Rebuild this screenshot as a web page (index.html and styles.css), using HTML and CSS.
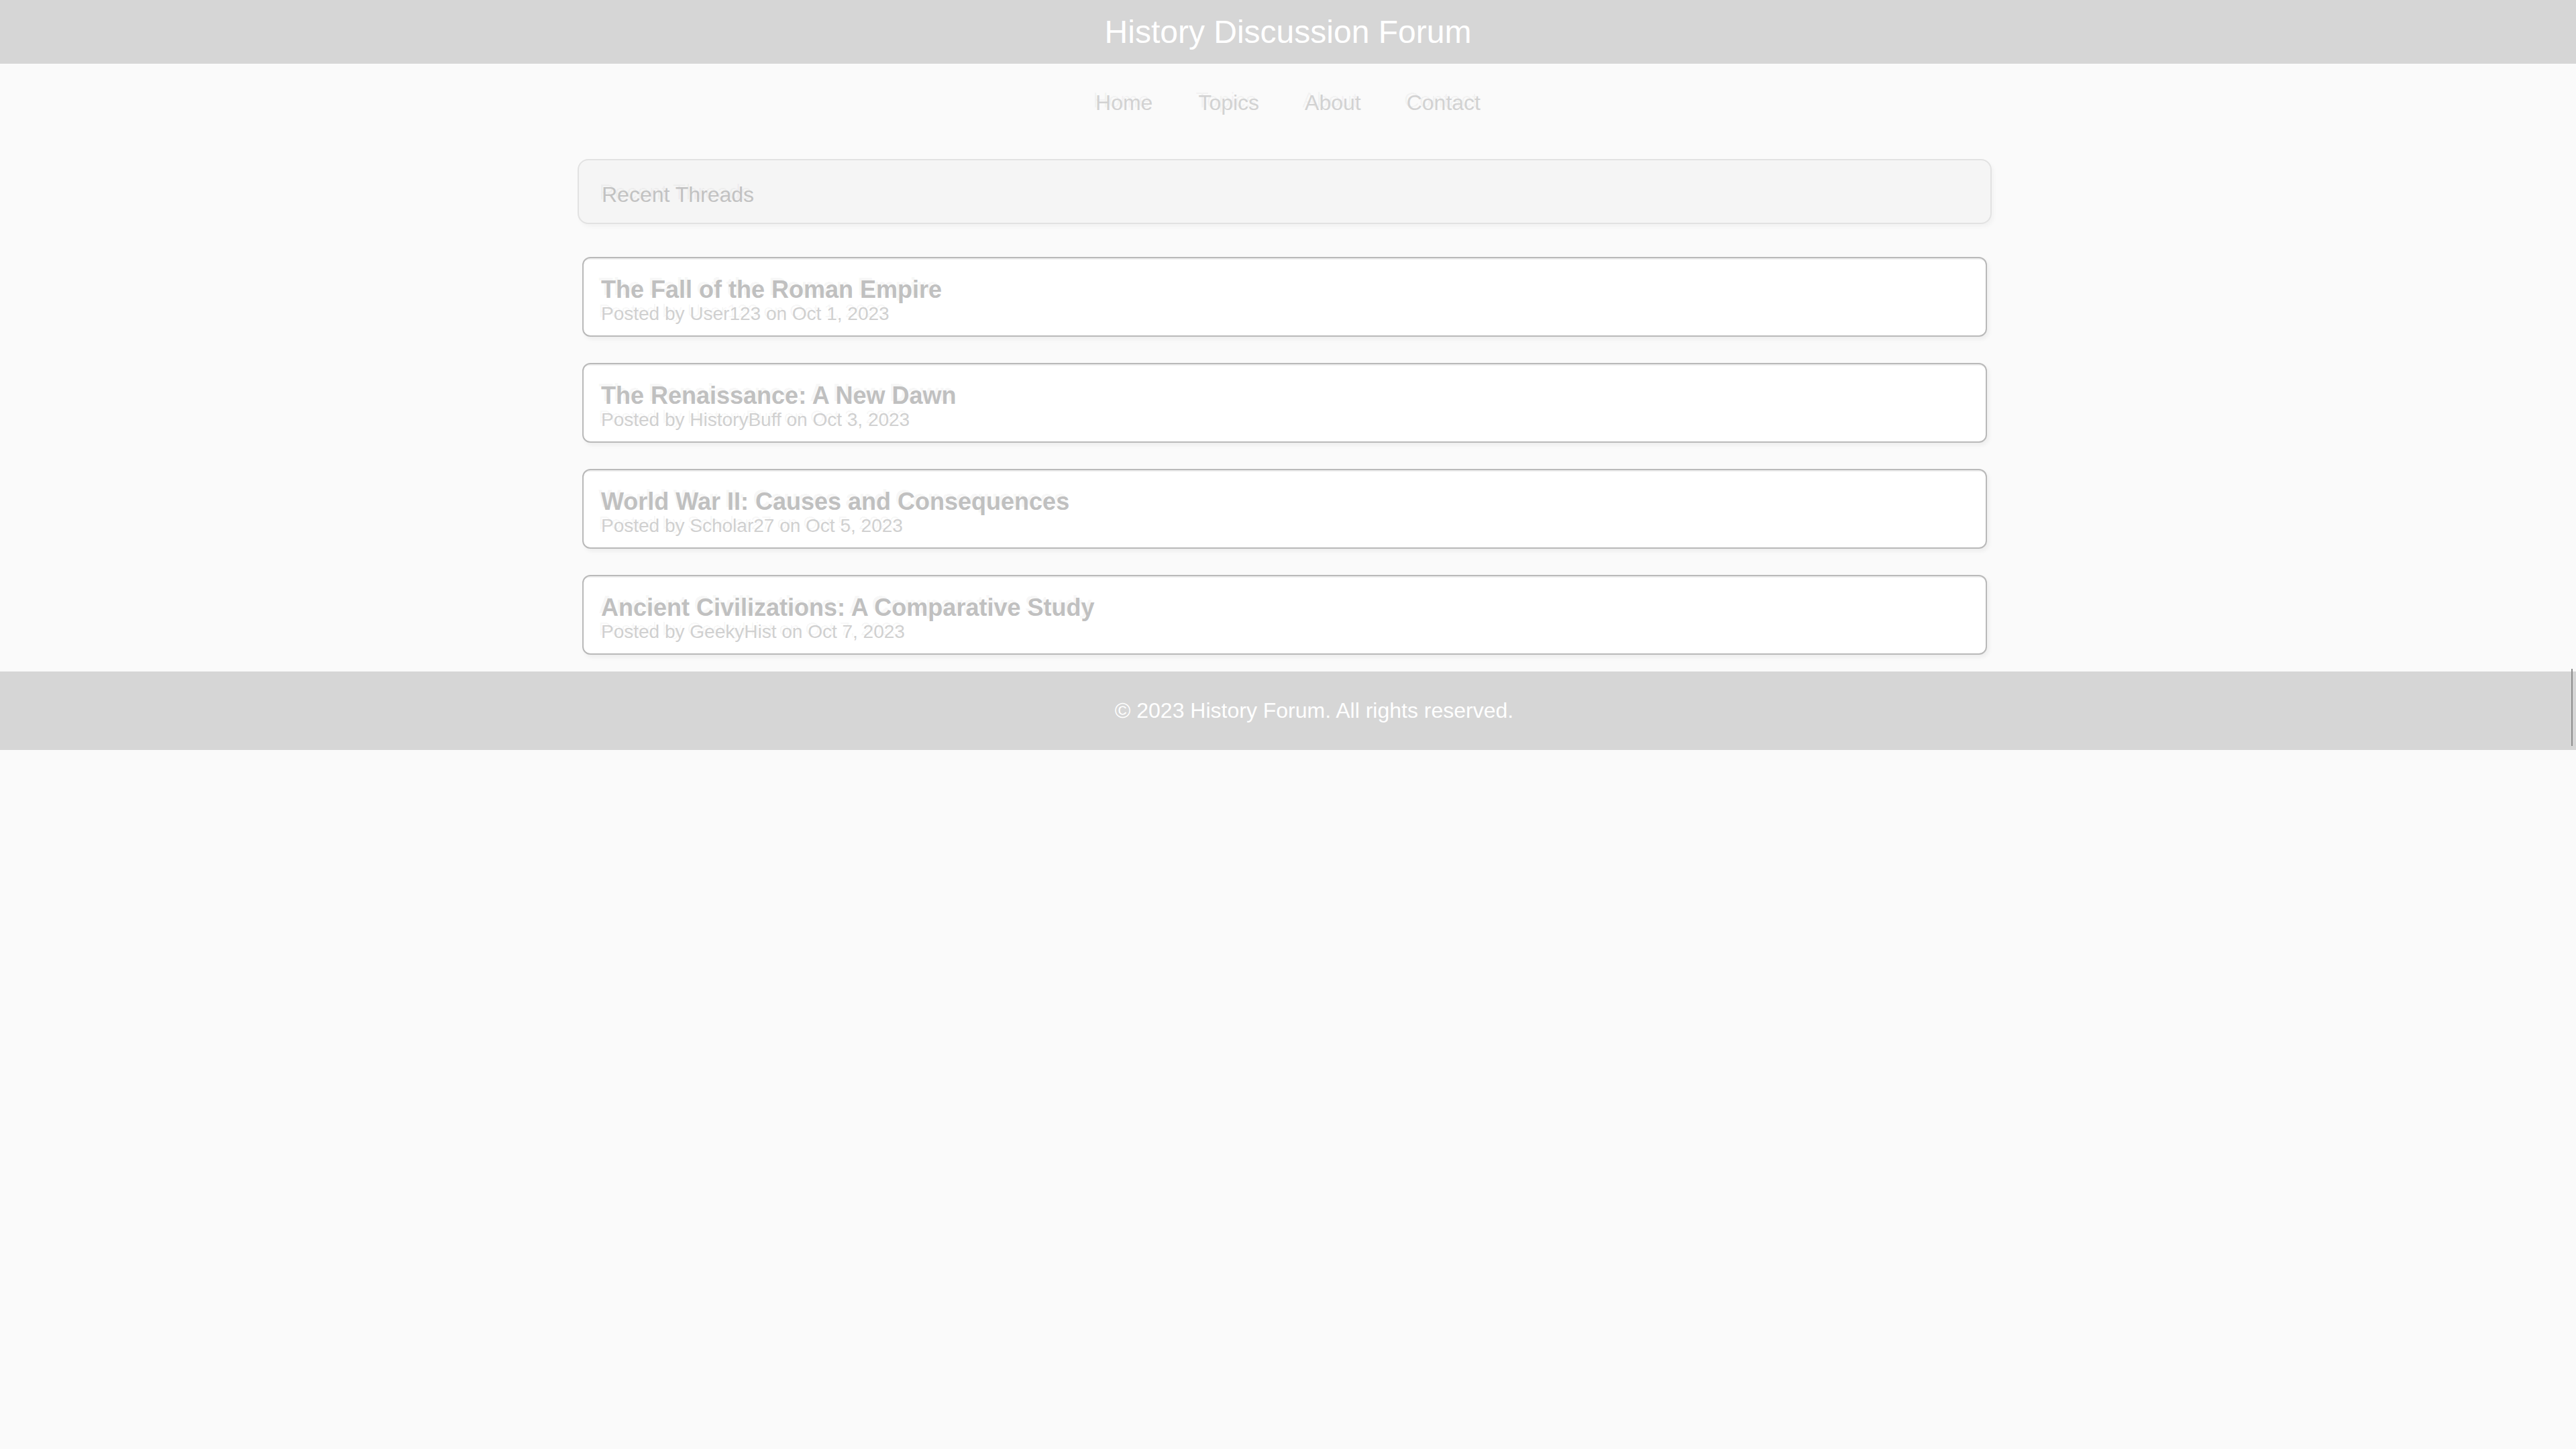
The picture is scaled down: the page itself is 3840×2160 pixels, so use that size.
FILE: index.html
```html
<!DOCTYPE html>
<html lang="en">
<head>
<meta charset="utf-8">
<title>History Discussion Forum</title>
<link rel="stylesheet" href="styles.css">
</head>
<body>
<header class="site-header">
  <h1 class="site-title">History Discussion Forum</h1>
</header>
<nav class="site-nav">
  <a class="nav-link" href="#">Home</a>
  <a class="nav-link" href="#">Topics</a>
  <a class="nav-link" href="#">About</a>
  <a class="nav-link" href="#">Contact</a>
</nav>
<main class="content">
  <section class="section-head">
    <h2 class="section-title">Recent Threads</h2>
  </section>
  <ul class="thread-list">
    <li class="thread">
      <h3 class="thread-title">The Fall of the Roman Empire</h3>
      <p class="thread-meta">Posted by User123 on Oct 1, 2023</p>
    </li>
    <li class="thread">
      <h3 class="thread-title">The Renaissance: A New Dawn</h3>
      <p class="thread-meta">Posted by HistoryBuff on Oct 3, 2023</p>
    </li>
    <li class="thread">
      <h3 class="thread-title">World War II: Causes and Consequences</h3>
      <p class="thread-meta">Posted by Scholar27 on Oct 5, 2023</p>
    </li>
    <li class="thread">
      <h3 class="thread-title">Ancient Civilizations: A Comparative Study</h3>
      <p class="thread-meta">Posted by GeekyHist on Oct 7, 2023</p>
    </li>
  </ul>
</main>
<footer class="site-footer">
  <p class="footer-text">&copy; 2023 History Forum. All rights reserved.</p>
</footer>
</body>
</html>
```

FILE: styles.css
```css
* {
  box-sizing: border-box;
}

html, body {
  margin: 0;
  padding: 0;
}

body {
  background: #fafafa;
  font-family: "Liberation Sans", Arial, sans-serif;
  font-size: 32px;
  color: #c4c4c4;
  overflow-x: hidden;
}

.site-header {
  background: #d6d6d6;
  padding: 20px 0;
  text-align: center;
}

.site-title {
  margin: 0;
  font-size: 48px;
  font-weight: normal;
  line-height: 55px;
  color: #ffffff;
}

.site-nav {
  display: flex;
  justify-content: center;
  gap: 68px;
  padding: 40px 0 0;
  line-height: 37px;
}

.nav-link {
  color: #d2d2d2;
  text-decoration: none;
  text-shadow: -4px -4px 0 rgba(0, 0, 0, 0.04);
}

.content {
  width: 2108px;
  margin: 65px 0 0 calc(50% - 1059px);
}

.section-head {
  background: #f5f5f5;
  border: 2px solid #e2e2e2;
  border-radius: 16px;
  box-shadow: 3px 4px 6px rgba(0, 0, 0, 0.035);
  padding: 33px 34px 23px;
}

.section-title {
  margin: 0;
  font-size: 32px;
  font-weight: normal;
  line-height: 37px;
  color: #c2c2c2;
  text-shadow: -4px -4px 0 rgba(0, 0, 0, 0.04);
}

.thread-list {
  list-style: none;
  margin: 49px 7px 0;
  padding: 0;
  display: flex;
  flex-direction: column;
  gap: 39px;
}

.thread {
  background: #ffffff;
  border: 2px solid #b9b9b9;
  border-radius: 12px;
  box-shadow: 3px 4px 6px rgba(0, 0, 0, 0.05), inset 0 6px 0 -4px #efefef;
  padding: 26px 26px 16px;
}

.thread-title {
  margin: 0;
  font-size: 36px;
  font-weight: bold;
  line-height: 41px;
  color: #c0c0c0;
  text-shadow: -4px -4px 0 rgba(0, 0, 0, 0.04);
}

.thread-meta {
  margin: 0;
  font-size: 28px;
  line-height: 32px;
  color: #d0d0d0;
  text-shadow: -4px -4px 0 rgba(0, 0, 0, 0.04);
}

.site-footer {
  position: relative;
  margin-top: 25px;
  background: #d6d6d6;
  padding: 40px 0 40px 78px;
  text-align: center;
}

.site-footer::after {
  content: "";
  position: absolute;
  right: 5px;
  top: -4px;
  width: 2px;
  height: 115px;
  background: #8e8e8e;
}

.footer-text {
  margin: 0;
  font-size: 32px;
  line-height: 37px;
  color: #ffffff;
}
```
